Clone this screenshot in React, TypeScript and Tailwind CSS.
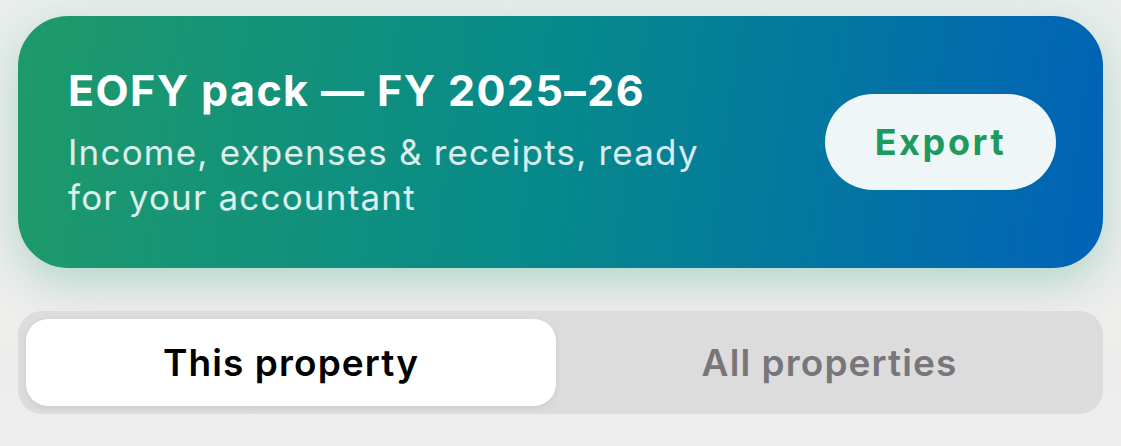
export default function App() {
  return (
    <div
      className="w-[1121px] h-[446px] overflow-hidden bg-gradient-to-b from-[#e9eeec] to-[#efeded] flex flex-col px-[18px] pt-[16px] gap-[43px]"
      style={{ fontFamily: 'Inter, "Noto Sans", sans-serif' }}
    >
      <div className="h-[252px] shrink-0 rounded-[50px] bg-[linear-gradient(98deg,#1f9a6a_0%,#078a8a_48%,#0062b8_100%)] shadow-[0_14px_44px_rgba(31,154,106,0.28)] flex items-center pl-[50px] pr-[47px] justify-between">
        <div className="flex flex-col">
          <div className="text-white font-bold text-[43px] leading-[50px] tracking-[1.4px]">EOFY pack — FY 2025–26</div>
          <div className="text-white/85 text-[35px] leading-[45px] mt-[15px] w-[660px] tracking-[1.2px]">Income, expenses &amp; receipts, ready for your accountant</div>
        </div>
        <div className="w-[231px] h-[96px] rounded-full bg-[#eef6f8] flex items-center justify-center text-[#1e9a5e] font-bold text-[36px] tracking-[2.6px]">Export</div>
      </div>
      <div className="h-[103px] shrink-0 rounded-[24px] bg-[#dcdcdc] py-[8px] pl-[8px] flex">
        <div className="w-[530px] rounded-[22px] bg-white shadow-[0_2px_6px_rgba(0,0,0,0.08)] flex items-center justify-center text-black font-semibold text-[37px] tracking-[1.1px]">This property</div>
        <div className="flex-1 flex items-center justify-center text-[#77767a] font-semibold text-[37px] tracking-[1.1px]">All properties</div>
      </div>
    </div>
  );
}
